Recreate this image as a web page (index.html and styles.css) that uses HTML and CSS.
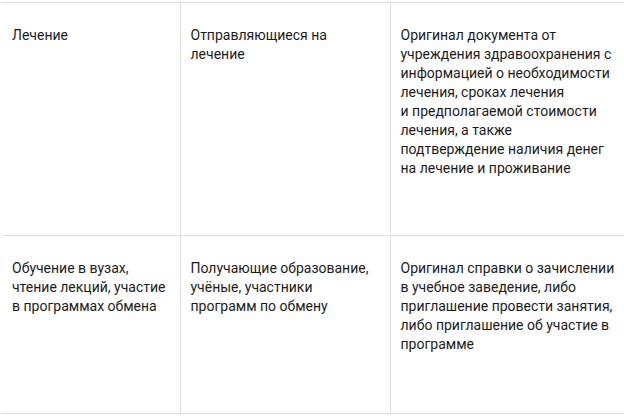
FILE: index.html
```html
<!DOCTYPE html>
<html lang="ru">
<head>
<meta charset="utf-8">
<title>Таблица</title>
<link rel="stylesheet" href="styles.css">
</head>
<body>
<table class="docs">
  <colgroup>
    <col class="c1"><col class="c2"><col class="c3">
  </colgroup>
  <tbody>
    <tr class="row row-a">
      <td>Лечение</td>
      <td>Отправляющиеся на<br>лечение</td>
      <td>Оригинал документа от<br>учреждения здравоохранения с<br>информацией о необходимости<br>лечения, сроках лечения<br>и предполагаемой стоимости<br>лечения, а также<br>подтверждение наличия денег<br>на лечение и проживание</td>
    </tr>
    <tr class="row row-b">
      <td>Обучение в вузах,<br>чтение лекций, участие<br>в программах обмена</td>
      <td>Получающие образование,<br>учёные, участники<br>программ по обмену</td>
      <td>Оригинал справки о зачислении<br>в учебное заведение, либо<br>приглашение провести занятия,<br>либо приглашение об участие в<br>программе</td>
    </tr>
  </tbody>
</table>
</body>
</html>
```

FILE: styles.css
```css
html, body {
  margin: 0;
  padding: 0;
  background: #fff;
  overflow: hidden;
}
body {
  padding: 2px 0 0 2px;
  font-family: Roboto, "Liberation Sans", sans-serif;
  font-size: 14px;
  line-height: 19px;
  color: #1c1c1c;
}
.docs {
  border-collapse: collapse;
  table-layout: fixed;
  width: 640px;
}
.c1 { width: 178px; }
.c2 { width: 210px; }
.c3 { width: 252px; }
.row {
  border-top: 1px solid #e0e0e0;
  border-bottom: 1px solid #e0e0e0;
}
.row td {
  vertical-align: top;
  padding: 23px 10px 57px;
  border-left: 1px solid #e0e0e0;
  white-space: nowrap;
}
.row td:first-child {
  border-left: none;
}
.row-b td {
  padding-bottom: 59px;
}
```
